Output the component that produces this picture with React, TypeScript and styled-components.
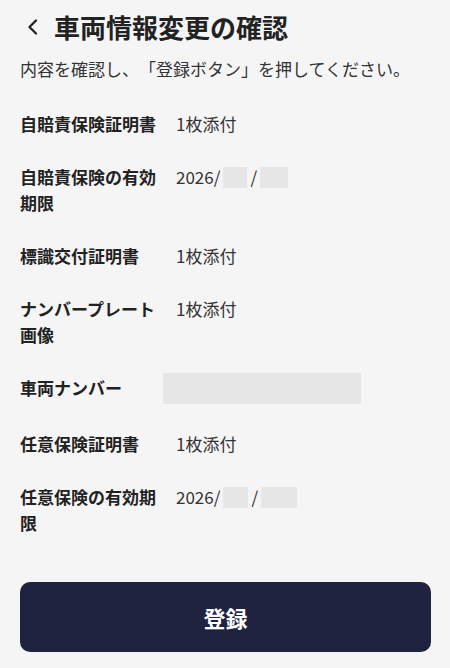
import styled, { createGlobalStyle } from 'styled-components';

const GlobalStyle = createGlobalStyle`
  html, body {
    margin: 0;
    padding: 0;
    background: #f5f5f5;
  }
  body {
    font-family: 'Noto Sans CJK JP', 'Noto Sans', sans-serif;
    color: #222;
    text-spacing-trim: space-all;
  }
`;

interface Item {
  label: string;
  value?: string;
  date?: [number, number];
  masked?: boolean;
}

const items: Item[] = [
  { label: '自賠責保険証明書', value: '1枚添付' },
  { label: '自賠責保険の有効期限', date: [24, 28] },
  { label: '標識交付証明書', value: '1枚添付' },
  { label: 'ナンバープレート画像', value: '1枚添付' },
  { label: '車両ナンバー', masked: true },
  { label: '任意保険証明書', value: '1枚添付' },
  { label: '任意保険の有効期限', date: [25, 36] },
];

const App = () => {
  return (
    <>
      <GlobalStyle />
      <Page>
        <Header>
          <BackButton aria-label="戻る">
            <svg width="12" height="16" viewBox="0 0 12 16" fill="none">
              <path
                d="M9 1.5 L2.5 8 L9 14.5"
                stroke="#222"
                strokeWidth="2.3"
                strokeLinecap="round"
                strokeLinejoin="round"
              />
            </svg>
          </BackButton>
          <Title>車両情報変更の確認</Title>
        </Header>
        <Lead>内容を確認し、「登録ボタン」を押してください。</Lead>
        <List>
          {items.map((item) => (
            <Row key={item.label}>
              <Label>{item.label}</Label>
              {item.masked ? (
                <MaskBox />
              ) : item.date ? (
                <Value>
                  2026/<Blank $w={item.date[0]} />/<Blank $w={item.date[1]} />
                </Value>
              ) : (
                <Value>{item.value}</Value>
              )}
            </Row>
          ))}
        </List>
        <SubmitButton>登録</SubmitButton>
      </Page>
    </>
  );
};

export default App;

const Page = styled.div`
  display: flex;
  flex-direction: column;
  padding: 9px 19px 15px 20px;
`;

const Header = styled.div`
  display: flex;
  align-items: center;
  height: 36px;
`;

const BackButton = styled.button`
  display: flex;
  align-items: center;
  justify-content: flex-start;
  width: 34px;
  height: 36px;
  padding: 0 0 0 7px;
  margin: 0;
  border: none;
  background: none;
`;

const Title = styled.h1`
  margin: 0;
  font-size: 26px;
  line-height: 36px;
  font-weight: 700;
  color: #222;
`;

const Lead = styled.p`
  margin: 12px 0 0;
  font-size: 17px;
  line-height: 24px;
  color: #333;
`;

const List = styled.div`
  display: flex;
  flex-direction: column;
  gap: 27px;
  margin-top: 30px;
`;

const Row = styled.div`
  display: flex;
  align-items: flex-start;
`;

const Label = styled.div`
  width: 140px;
  flex-shrink: 0;
  font-size: 17px;
  line-height: 26px;
  font-weight: 700;
  color: #222;
`;

const Value = styled.div`
  display: flex;
  align-items: center;
  margin-left: 16px;
  font-size: 17px;
  line-height: 26px;
  color: #333;
`;

const Blank = styled.span<{ $w: number }>`
  display: inline-block;
  width: ${(p) => p.$w}px;
  height: 21px;
  margin: 0 3px 0 3px;
  background: #e6e6e6;
`;

const MaskBox = styled.div`
  width: 198px;
  height: 31px;
  margin: -2px 0 0 3px;
  background: #e6e6e6;
`;

const SubmitButton = styled.button`
  margin-top: 46px;
  width: 100%;
  height: 70px;
  border: none;
  border-radius: 10px;
  background: #1f2340;
  color: #fff;
  font-family: 'Noto Sans CJK JP', 'Noto Sans', sans-serif;
  font-size: 22px;
  font-weight: 700;
`;
